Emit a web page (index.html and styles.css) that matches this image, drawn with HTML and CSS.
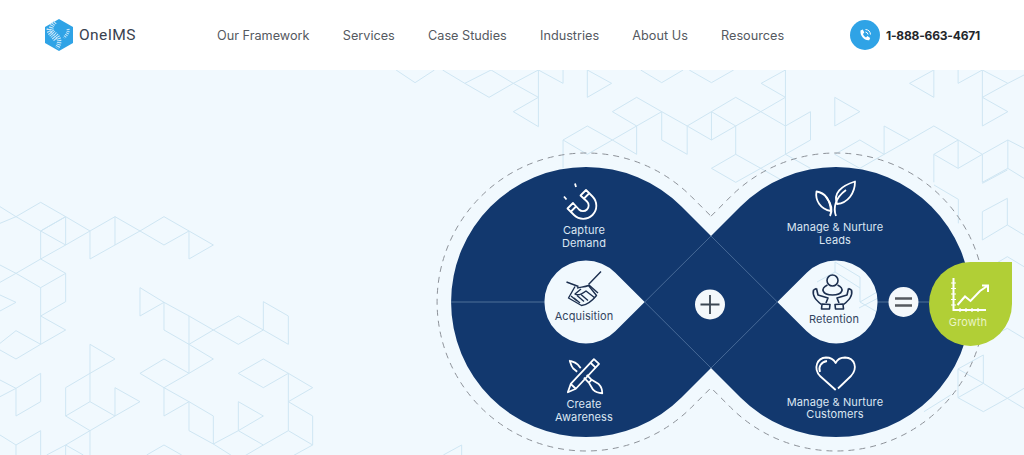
FILE: index.html
```html
<!DOCTYPE html>
<html lang="en">
<head>
  <meta charset="UTF-8">
  <meta name="viewport" content="width=device-width, initial-scale=1">
  <title>OneIMS</title>
  <link rel="stylesheet" href="styles.css">
</head>
<body>

  <header class="site-header">
    <a class="logo" href="#">
      <svg class="logo-mark" viewBox="0 0 30 32" width="30" height="32">
        <path class="logo-hex" d="M15 0 L29 8 V24 L15 32 L1 24 V8 Z"/>
        <path class="logo-dna" d="M11 3 C6 8 6 11 11 15 C15 18 17 23 13 29"/>
        <path class="logo-dna" d="M5 10 C4 13 8 16 12 21"/>
        <path class="logo-dna logo-dna-thin" d="M24 10 C25 14 22 16 20 19"/>
      </svg>
      <span class="logo-text">OneIMS</span>
    </a>

    <nav class="main-nav">
      <a href="#">Our Framework</a>
      <a href="#">Services</a>
      <a href="#">Case Studies</a>
      <a href="#">Industries</a>
      <a href="#">About Us</a>
      <a href="#">Resources</a>
    </nav>

    <a class="phone" href="#">
      <span class="phone-icon">
        <svg viewBox="0 0 30 30" width="30" height="30">
          <path class="phone-handset" d="M10.5 10.5 L12.8 9.6 L14.3 12.6 L13 13.9 C13.4 15.4 14.5 16.7 16 17.4 L17.4 16.1 L20.2 18 L19.2 20.2 C14.5 20.8 9.8 15.8 10.5 10.5 Z"/>
          <path class="phone-wave" d="M15.5 9.5 A5.5 5.5 0 0 1 20.5 14.5 M15.5 12 A3 3 0 0 1 18 14.5"/>
        </svg>
      </span>
      <span>1-888-663-4671</span>
    </a>
  </header>

  <main class="hero">
    <svg class="hero-art" viewBox="0 70 1024 385" width="1024" height="385">

      <!-- background pattern, left block, traced from a 3x crop -->
      <g class="pattern" transform="translate(0 190) scale(.33333)">
        <polyline points="0,50 48,80 122,37 197,80 270,123 345,80 420,123 492,80 567,123 640,165 567,207 567,123"/>
        <polyline points="0,100 48,80 122,123 197,80 197,165 270,123 270,207 345,165 345,80"/>
        <polyline points="122,123 197,165 122,207 122,123 197,80"/>
        <polyline points="345,165 420,123 492,165 567,123"/>
        <polyline points="0,225 48,250 122,207 197,250 122,293 48,250 0,277"/>
        <polyline points="197,250 197,335 122,378 122,293"/>
        <polyline points="122,378 197,420 122,463 122,378"/>
        <polyline points="0,460 48,422 122,463 48,507 0,480"/>
        <polyline points="0,315 48,337 0,363"/>
        <polyline points="0,570 48,595 122,550 122,635 48,678 48,595 0,620"/>
        <polyline points="0,735 48,765 122,722 122,795"/>
        <polyline points="48,765 48,795"/>
        <polyline points="420,293 492,337 420,378 420,293"/>
        <polyline points="492,337 567,378 640,420 715,378 790,420 715,463 640,420 567,463 492,420 492,337"/>
        <polyline points="567,378 567,550 640,507 567,463"/>
        <polyline points="790,420 790,335 865,378 865,463 790,420"/>
        <polyline points="567,550 492,507 420,550 492,593 567,550"/>
        <polyline points="492,593 492,678 567,635 492,593"/>
        <polyline points="567,635 640,678 640,762 567,722 567,635"/>
        <polyline points="640,762 715,722 790,678 715,635 715,722 790,765 865,722 938,765 865,805"/>
        <polyline points="640,762 700,800"/>
        <polyline points="790,765 730,800"/>
        <polyline points="715,550 790,507 865,550 790,593 715,550"/>
        <polyline points="865,550 938,593 865,635 938,678 938,765"/>
        <polyline points="865,550 865,722"/>
        <polyline points="270,463 345,507 270,550 270,463"/>
        <polyline points="270,550 197,593 197,678 270,635 345,678 270,722 197,678"/>
        <polyline points="270,550 270,635"/>
        <polyline points="345,678 345,593 420,635 345,678"/>
        <polyline points="270,722 270,795"/>
        <polyline points="270,722 197,765 140,795"/>
        <polyline points="197,765 197,795"/>
        <polyline points="197,765 250,795"/>
        <polyline points="440,795 492,765 545,795"/>
      </g>

      <!-- background pattern, top right block -->
      <g class="pattern" transform="translate(390 65) scale(.40434 .33333)">
        <polyline points="15,15 62,53 110,15"/>
        <polyline points="130,15 185,55 245,97 305,55 367,97 305,140 367,185 367,15"/>
        <polyline points="185,55 250,15 305,55 367,15 428,55 428,15"/>
        <polyline points="488,15 548,55 488,97 488,15"/>
        <polyline points="620,15 672,53 725,15"/>
        <polyline points="740,15 795,53 850,15"/>
        <polyline points="978,15 918,55 978,97 978,15"/>
        <polyline points="672,140 610,97 550,140 610,183 672,140 735,183 795,140 855,97 917,140 978,97 978,183 917,140 855,183 795,140 795,225 735,183 735,268 672,225 672,140"/>
        <polyline points="795,225 855,183 855,268 795,310 855,352 917,310 855,268"/>
        <polyline points="978,183 1040,140 1040,225 978,268 978,183"/>
        <polyline points="1100,97 1162,140 1100,183 1100,97"/>
        <polyline points="428,310 428,225 488,183 550,225 610,268 610,183 550,225 488,268 428,225"/>
        <polyline points="917,310 978,268 1040,310"/>
        <polyline points="917,310 978,352"/>
        <polyline points="1285,55 1345,15 1345,97 1285,55"/>
        <polyline points="1405,15 1405,55 1465,15 1528,55 1568,30"/>
        <polyline points="1465,97 1528,55"/>
        <polyline points="1465,15 1465,97 1528,140 1465,183 1465,97"/>
        <polyline points="1222,183 1285,225 1222,268 1222,183"/>
        <polyline points="1285,225 1345,183 1405,225 1465,268 1405,310 1345,268 1405,225 1405,310"/>
        <polyline points="1345,268 1345,352"/>
        <polyline points="1465,268 1465,352 1528,310 1528,225 1465,268"/>
        <polyline points="1528,225 1568,250"/>
        <polyline points="1528,310 1568,340"/>
        <polyline points="1100,268 1162,225 1222,268 1162,310 1100,268"/>
      </g>

      <!-- pattern right of the right lobe -->
      <g class="pattern" transform="translate(724 140) scale(.33333)">
        <polyline points="850,175 775,215 775,300 850,255 850,175"/>
        <polyline points="850,255 900,285"/>
        <polyline points="630,135 703,178 703,250"/>
        <polyline points="775,130 850,90"/>
        <polyline points="850,350 900,380"/>
        <polyline points="850,350 775,395"/>
      </g>
      <g class="pattern" transform="translate(724 295) scale(.33333)">
        <polyline points="702,222 778,180 778,265 702,308 702,222 778,265 850,310 900,280"/>
        <polyline points="702,308 778,350 850,310 900,340"/>
        <polyline points="770,140 850,100 900,130"/>
        <polyline points="680,300 600,350"/>
      </g>

      <!-- pattern seen through the retention teardrop -->
      <g class="pattern">
        <polyline points="817,282 835,272 835,262 860,277 860,302 884,316"/>
        <polyline points="835,272 860,288"/>
        <polyline points="860,302 884,288"/>
        <polyline points="859,308 884,295"/>
      </g>
      <g class="pattern" transform="translate(430 295) scale(.33333)">
        <polyline points="40,480 95,450 95,480"/>
      </g>

      <!-- infinity shape, the two teardrops are holes so the pattern shows through -->
      <path class="ring" d="M711 216.2 L730.6 196.6 A149 149 0 1 1 730.6 407.4 L711 387.8 L691.4 407.4 A149 149 0 1 1 691.4 196.6 Z"/>
      <path class="lobes" fill-rule="evenodd" d="M711 236 L740.5 206.5 A135 135 0 1 1 740.5 397.5 L711 368 L681.5 397.5 A135 135 0 1 1 681.5 206.5 Z
        M615.3 272.7 L644.7 302 L615.3 331.3 A41.5 41.5 0 1 1 615.3 272.7 Z
        M806.7 272.7 L777.3 302 L806.7 331.3 A41.5 41.5 0 1 0 806.7 272.7 Z"/>

      <path class="seam" d="M711 236 L644.7 302 L711 368 L777.3 302 Z"/>
      <path class="seam seam-flat" d="M451 302 H544.5 M877.5 302 H929"/>

      <g class="badge">
        <circle cx="710" cy="304.5" r="15"/>
        <path class="badge-sign" d="M700.5 304.5 H719.5 M710 295 V314"/>
        <circle cx="903.5" cy="302" r="15"/>
        <path class="badge-sign badge-equal" d="M895 298.5 H912 M895 305.5 H912"/>
      </g>

      <path class="growth-drop" d="M1012 262 V304 A41.5 42 0 1 1 970.5 262 Z"/>

      <!-- magnet -->
      <g class="icon-light">
        <path d="M586 190 L592.500 196.500 A13 13 0 1 1 574 215 L567.500 208.500 L573 203 L579 209.500 A5.600 5.600 0 0 0 587 201.500 L580.500 195.500 Z"/>
        <path d="M589 193.500 L583.500 199 M570.500 212 L576 206.500 M575 183.500 L576 187 M564 196.500 L566.500 199.500"/>
      </g>

      <!-- pencil and brush -->
      <g class="icon-light">
        <g transform="rotate(43 582.500 376.500)">
          <path d="M579 356 H586 V390 L582.500 398 L579 390 Z"/>
          <path d="M579 361 H586 M579 390 H586"/>
        </g>
        <g transform="rotate(-45 586 377)">
          <path d="M583.500 367 L583 362 C583 359 585 356 586 354 C587 356 589 359 589 362 L588.500 367"/>
          <path d="M584 383 H588 L590 391 C590 395 588 398 586 400 C584 398 582 395 582 391 Z"/>
          <path d="M584 383 V376 M588 383 V376"/>
        </g>
      </g>

      <!-- sprout -->
      <g class="icon-light">
        <path d="M837 204 C833 193 841 186 855 181.500 C855 193 848 203 837 204 Z"/>
        <path d="M831 211 C830 200 826 193 816.500 191.500 C815 200 820 209 831 211 Z"/>
        <path d="M830 216 C833 210 831 203 826 197 M836 216 C833 208 835 198 846 190"/>
      </g>

      <!-- heart -->
      <g class="icon-light">
        <path d="M838 388.500 L851 376 C858 368 855 358 845 357.500 C840 357.500 837 360 835.700 363 C834 360 831 357.500 826 357.500 C817 358 813 368 820 376 L835.700 390"/>
        <path d="M820 372 C818 367 821 362 827 361"/>
      </g>

      <!-- handshake -->
      <g class="icon-dark">
        <path d="M601 271.500 L588.500 284.500 M566.500 282 L578.500 286.500 M589 285 L598 293"/>
        <path d="M575 286.500 L568.500 298 L581.500 305.500 C587 305 592 301 596.500 295.500 L588.500 285.500 C585 287 581 287 577 288"/>
        <path d="M581 289 L575 294 C578 296 582 294 586 291 L595 298"/>
        <path d="M574 298 L580 303 M577 295.500 L584 301.500 M581 294.500 L588 300.500 M571 296 L577 301"/>
      </g>

      <!-- person in two hands -->
      <g class="icon-dark icon-dark-bold">
        <circle cx="832.500" cy="280.500" r="5.500"/>
        <path d="M827.500 285 C820 288 822 295 832.500 295 C843 295 845 288 837.500 285"/>
        <path d="M816.500 288.500 L818 295 L828 298 L826 303 M813.500 290 C812 296 816 300 821.500 304.500 M816.500 288.500 L813.500 290"/>
        <path d="M822 304 L830 304.500 L829.500 309 L821.500 309 Z"/>
        <path d="M848.500 288.500 L847 295 L837 298 L839 303 M851.500 290 C853 296 849 300 843.500 304.500 M848.500 288.500 L851.500 290"/>
        <path d="M843 304 L835 304.500 L835.500 309 L843.500 309 Z"/>
      </g>

      <!-- growth chart -->
      <g class="icon-growth">
        <path d="M953.500 278 V310 H986"/>
        <path class="icon-growth-tick" d="M951 283 H956 M951 288.500 H956 M951 294 H956 M951 299.500 H956 M951 305 H956 M960 308 V312 M966 308 V312 M972 308 V312 M978 308 V312"/>
        <path d="M957.500 305 L965 296.500 L970.500 301 L980 291 L988 285.500 M982 285.500 H988 V292"/>
      </g>

      <text class="label label-light" x="584" y="234">Capture</text>
      <text class="label label-light" x="584" y="247">Demand</text>
      <text class="label label-dark" x="584" y="320">Acquisition</text>
      <text class="label label-light" x="584" y="408">Create</text>
      <text class="label label-light" x="584" y="421">Awareness</text>
      <text class="label label-light" x="835" y="231">Manage &amp; Nurture</text>
      <text class="label label-light" x="835" y="244">Leads</text>
      <text class="label label-dark" x="834" y="323">Retention</text>
      <text class="label label-light" x="835" y="406">Manage &amp; Nurture</text>
      <text class="label label-light" x="835" y="418">Customers</text>
      <text class="label label-growth" x="968" y="326">Growth</text>
    </svg>
  </main>

</body>
</html>
```

FILE: styles.css
```css
body {
  margin: 0;
  height: 455px;
  overflow: hidden;
  background: #f1f9fe;
  font-family: 'Inter', 'Open Sans', sans-serif;
}

a {
  text-decoration: none;
}

.site-header {
  display: flex;
  align-items: center;
  height: 70px;
  padding: 0 44px;
  background: white;
}

.logo {
  display: flex;
  align-items: center;
  gap: 5px;
  width: 173px;
}

.logo-hex {
  fill: #2fa3e6;
}

.logo-dna {
  fill: none;
  stroke: #cbe8fa;
  stroke-width: 4.5;
  stroke-dasharray: 1 1;
}

.logo-dna-thin {
  stroke-width: 3;
}

.logo-text {
  font-family: 'Roboto', sans-serif;
  font-size: 15.5px;
  letter-spacing: 0.4px;
  color: #39414f;
}

.main-nav {
  display: flex;
  gap: 33.2px;
}

.main-nav a {
  font-size: 12.7px;
  color: #55595f;
}

.phone {
  display: flex;
  align-items: center;
  gap: 6px;
  margin-left: auto;
  font-size: 12px;
  font-weight: 700;
  letter-spacing: -0.2px;
  color: #23262b;
}

.phone-icon {
  width: 30px;
  height: 30px;
  border-radius: 50%;
  background: #2fa3e6;
}

.phone-icon svg {
  display: block;
}

.phone-handset {
  fill: white;
}

.phone-wave {
  fill: none;
  stroke: white;
  stroke-width: 1;
}

.hero {
  height: 385px;
}

.hero-art {
  display: block;
}

.pattern polyline {
  fill: none;
  stroke: #cfe6f3;
  stroke-width: 1;
  vector-effect: non-scaling-stroke;
}

.ring {
  fill: none;
  stroke: #8d9299;
  stroke-width: 1;
  stroke-dasharray: 6 5;
}

.lobes {
  fill: #12386e;
}

.seam {
  fill: none;
  stroke: #5d7ea8;
  stroke-width: 0.7;
}

.seam-flat {
  stroke: #8fa9c6;
  stroke-width: 0.5;
}

.badge circle {
  fill: #f4f8fb;
}

.badge-sign {
  fill: none;
  stroke: #3b4652;
  stroke-width: 1.8;
}

.badge-equal {
  stroke: #55595f;
  stroke-width: 2.4;
}

.growth-drop {
  fill: #b1cf36;
}

.icon-light path {
  fill: none;
  stroke: white;
  stroke-width: 1.8;
  stroke-linejoin: round;
}

.icon-dark path,
.icon-dark circle {
  fill: none;
  stroke: #1c2f4f;
  stroke-width: 1.4;
  stroke-linejoin: round;
}

.icon-dark-bold path,
.icon-dark-bold circle {
  stroke-width: 1.6;
}

.icon-growth path {
  fill: none;
  stroke: white;
  stroke-width: 2;
}

.icon-growth .icon-growth-tick {
  stroke-width: 1.2;
}

.label {
  font-size: 11px;
  font-weight: 400;
  letter-spacing: 0.1px;
  text-anchor: middle;
}

.label-light {
  fill: #dbe6f2;
}

.label-dark {
  fill: #33455e;
}

.label-growth {
  fill: #eaf4c4;
}
```
